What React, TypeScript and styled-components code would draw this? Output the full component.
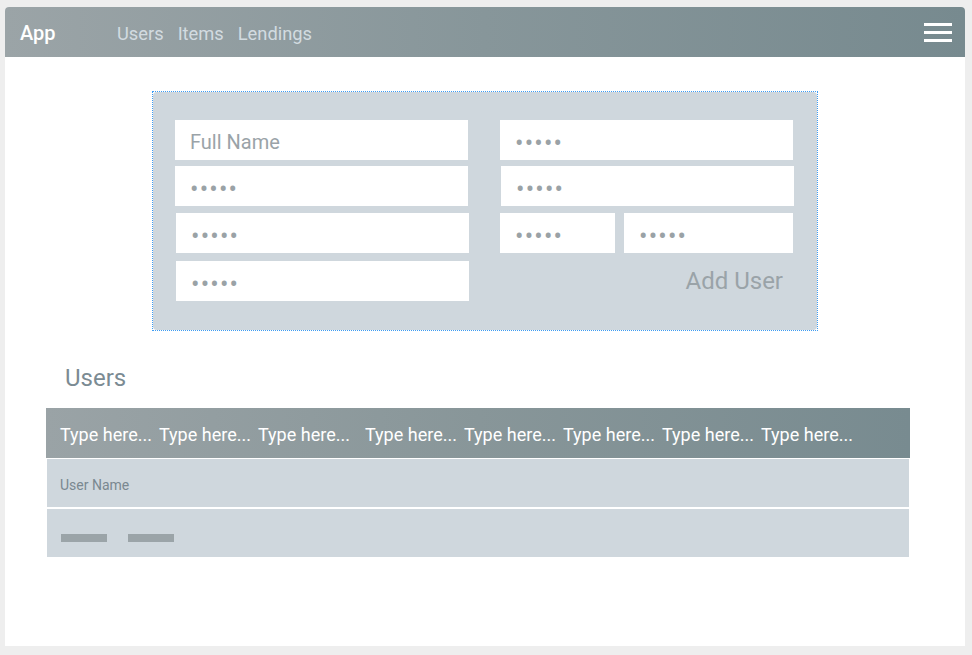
import React from "react";
import styled, { createGlobalStyle } from "styled-components";

const COLORS = {
  page: "#eeeeee",
  panel: "#cfd7dd",
  muted: "#9aa3a8",
  heading: "#7b8b93",
  link: "#d2dbe0",
};

const GlobalStyle = createGlobalStyle`
  html, body {
    margin: 0;
    padding: 0;
    background: ${COLORS.page};
    font-family: Roboto, "Noto Sans", Arial, sans-serif;
  }
  * { box-sizing: border-box; }
`;

const Page = styled.div`
  padding: 7px 7px 9px 5px;
  height: 655px;
`;

const Frame = styled.div`
  width: 960px;
  height: 639px;
  background: #ffffff;
  border-radius: 4px 4px 0 0;
  overflow: hidden;
  display: flex;
  flex-direction: column;
`;

const NavBar = styled.header`
  height: 50px;
  flex-shrink: 0;
  display: flex;
  align-items: center;
  padding: 2px 13px 0 15px;
  background: linear-gradient(90deg, #9ba4a7 0%, #87969a 50%, #778a8f 100%);
`;

const Brand = styled.div`
  color: #ffffff;
  font-size: 20px;
  font-weight: 500;
  width: 97px;
`;

const NavLinks = styled.nav`
  display: flex;
  gap: 14px;
  flex: 1;
`;

const NavLink = styled.a`
  color: ${COLORS.link};
  font-size: 18.3px;
  text-decoration: none;
  cursor: pointer;
`;

const Burger = styled.button`
  width: 28px;
  height: 19px;
  margin-top: -2px;
  padding: 0;
  border: none;
  background: transparent;
  display: flex;
  flex-direction: column;
  justify-content: space-between;
  cursor: pointer;
`;

const BurgerBar = styled.span`
  display: block;
  height: 3px;
  background: #ffffff;
`;

const Content = styled.main`
  flex: 1;
  display: flex;
  flex-direction: column;
`;

const Selection = styled.div`
  margin: 34px 0 0 147px;
  width: 666px;
  height: 240px;
  border: 1px dotted #3f9cf2;
`;

const FormPanel = styled.form`
  height: 100%;
  background: ${COLORS.panel};
  border-radius: 4px;
  padding: 28px 24px 0 22px;
  display: grid;
  grid-template-columns: 293px 293px;
  column-gap: 32px;
  align-items: start;
`;

const Column = styled.div`
  display: flex;
  flex-direction: column;
`;

const Field = styled.input<{ $gap?: number; $shift?: number }>`
  display: block;
  width: 100%;
  height: 40px;
  margin-top: ${(p) => p.$gap ?? 0}px;
  margin-left: ${(p) => p.$shift ?? 0}px;
  border: none;
  outline: none;
  background: #ffffff;
  padding: 3px 0 0 15px;
  font-family: Roboto, "Noto Sans", Arial, sans-serif;
  font-size: 20px;
  color: ${COLORS.muted};
  &::placeholder {
    color: ${COLORS.muted};
    opacity: 1;
  }
`;

const Dots = styled(Field)`
  font-size: 25px;
  letter-spacing: 1.2px;
  padding-top: 6px;
  &::placeholder {
    color: #9aa2a6;
  }
`;

const Pair = styled.div`
  display: grid;
  grid-template-columns: 115px 169px;
  column-gap: 9px;
  margin-top: 7px;
`;

const SubmitButton = styled.button`
  align-self: flex-end;
  margin: 14px 10px 0 0;
  padding: 0;
  border: none;
  background: transparent;
  color: ${COLORS.muted};
  font-family: Roboto, "Noto Sans", Arial, sans-serif;
  font-size: 24px;
  line-height: 28px;
  cursor: pointer;
`;

const SectionTitle = styled.h2`
  margin: 33px 0 0 60px;
  font-size: 24px;
  font-weight: 400;
  line-height: 28px;
  color: ${COLORS.heading};
`;

const Table = styled.div`
  margin: 16px 0 0 41px;
  width: 864px;
  display: flex;
  flex-direction: column;
`;

const HeadRow = styled.div`
  height: 50px;
  display: flex;
  align-items: center;
  padding: 2px 0 0 14px;
  background: linear-gradient(90deg, #9aa3a6 0%, #889699 50%, #788b90 100%);
`;

const HeadCell = styled.div<{ $w: number }>`
  width: ${(p) => p.$w}px;
  flex-shrink: 0;
  color: #ffffff;
  font-size: 18px;
  white-space: nowrap;
`;

const BodyRow = styled.div<{ $gap: number }>`
  height: 48px;
  margin: ${(p) => p.$gap}px 1px 0 1px;
  background: ${COLORS.panel};
  display: flex;
  align-items: center;
  padding-left: 13px;
`;

const CellText = styled.span`
  font-size: 14px;
  color: #7a8890;
  margin-top: 4px;
`;

const Skeletons = styled.div`
  display: flex;
  gap: 21px;
  margin: 9px 0 0 1px;
`;

const Skeleton = styled.span`
  display: block;
  width: 46px;
  height: 8px;
  background: #9ba4a8;
`;

const headers = [99, 99, 107, 99, 99, 99, 99, 99];

export default function App() {
  return (
    <>
      <GlobalStyle />
      <Page>
        <Frame>
          <NavBar>
            <Brand>App</Brand>
            <NavLinks>
              <NavLink>Users</NavLink>
              <NavLink>Items</NavLink>
              <NavLink>Lendings</NavLink>
            </NavLinks>
            <Burger aria-label="menu">
              <BurgerBar />
              <BurgerBar />
              <BurgerBar />
            </Burger>
          </NavBar>
          <Content>
            <Selection>
              <FormPanel onSubmit={(e) => e.preventDefault()}>
                <Column>
                  <Field placeholder="Full Name" />
                  <Dots placeholder="•••••" $gap={6} />
                  <Dots placeholder="•••••" $gap={7} $shift={1} />
                  <Dots placeholder="•••••" $gap={8} $shift={1} />
                </Column>
                <Column>
                  <Dots placeholder="•••••" />
                  <Dots placeholder="•••••" $gap={6} $shift={1} />
                  <Pair>
                    <Dots placeholder="•••••" />
                    <Dots placeholder="•••••" />
                  </Pair>
                  <SubmitButton type="submit">Add User</SubmitButton>
                </Column>
              </FormPanel>
            </Selection>
            <SectionTitle>Users</SectionTitle>
            <Table>
              <HeadRow>
                {headers.map((w, i) => (
                  <HeadCell key={i} $w={w}>Type here...</HeadCell>
                ))}
              </HeadRow>
              <BodyRow $gap={1}>
                <CellText>User Name</CellText>
              </BodyRow>
              <BodyRow $gap={2}>
                <Skeletons>
                  <Skeleton />
                  <Skeleton />
                </Skeletons>
              </BodyRow>
            </Table>
          </Content>
        </Frame>
      </Page>
    </>
  );
}
